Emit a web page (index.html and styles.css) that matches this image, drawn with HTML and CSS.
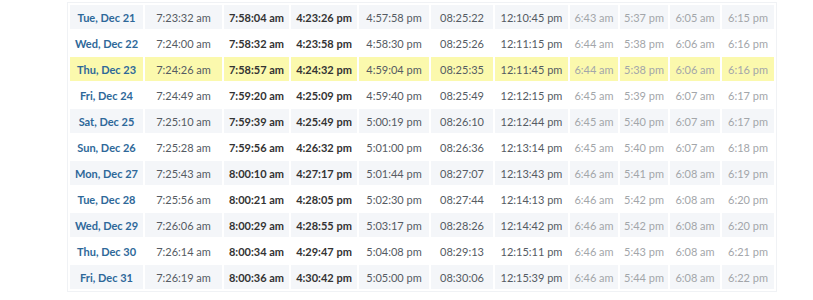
FILE: index.html
```html
<!DOCTYPE html>
<html>
<head>
<meta charset="utf-8">
<link rel="stylesheet" href="styles.css">
</head>
<body>
<div class="page">
<table class="sun">
<colgroup>
<col class="c1"><col class="c2"><col class="c3"><col class="c4"><col class="c5"><col class="c6"><col class="c7"><col class="c8"><col class="c9"><col class="c10"><col class="c11">
</colgroup>
<tbody>
<tr class="alt"><td class="day">Tue, Dec 21</td><td>7:23:32 am</td><td class="b">7:58:04 am</td><td class="b">4:23:26 pm</td><td>4:57:58 pm</td><td>08:25:22</td><td>12:10:45 pm</td><td class="l">6:43 am</td><td class="l">5:37 pm</td><td class="l">6:05 am</td><td class="l">6:15 pm</td></tr>
<tr><td class="day">Wed, Dec 22</td><td>7:24:00 am</td><td class="b">7:58:32 am</td><td class="b">4:23:58 pm</td><td>4:58:30 pm</td><td>08:25:26</td><td>12:11:15 pm</td><td class="l">6:44 am</td><td class="l">5:38 pm</td><td class="l">6:06 am</td><td class="l">6:16 pm</td></tr>
<tr class="today"><td class="day">Thu, Dec 23</td><td>7:24:26 am</td><td class="b">7:58:57 am</td><td class="b">4:24:32 pm</td><td>4:59:04 pm</td><td>08:25:35</td><td>12:11:45 pm</td><td class="l">6:44 am</td><td class="l">5:38 pm</td><td class="l">6:06 am</td><td class="l">6:16 pm</td></tr>
<tr><td class="day">Fri, Dec 24</td><td>7:24:49 am</td><td class="b">7:59:20 am</td><td class="b">4:25:09 pm</td><td>4:59:40 pm</td><td>08:25:49</td><td>12:12:15 pm</td><td class="l">6:45 am</td><td class="l">5:39 pm</td><td class="l">6:07 am</td><td class="l">6:17 pm</td></tr>
<tr class="alt"><td class="day">Sat, Dec 25</td><td>7:25:10 am</td><td class="b">7:59:39 am</td><td class="b">4:25:49 pm</td><td>5:00:19 pm</td><td>08:26:10</td><td>12:12:44 pm</td><td class="l">6:45 am</td><td class="l">5:40 pm</td><td class="l">6:07 am</td><td class="l">6:17 pm</td></tr>
<tr><td class="day">Sun, Dec 26</td><td>7:25:28 am</td><td class="b">7:59:56 am</td><td class="b">4:26:32 pm</td><td>5:01:00 pm</td><td>08:26:36</td><td>12:13:14 pm</td><td class="l">6:45 am</td><td class="l">5:40 pm</td><td class="l">6:07 am</td><td class="l">6:18 pm</td></tr>
<tr class="alt"><td class="day">Mon, Dec 27</td><td>7:25:43 am</td><td class="b">8:00:10 am</td><td class="b">4:27:17 pm</td><td>5:01:44 pm</td><td>08:27:07</td><td>12:13:43 pm</td><td class="l">6:46 am</td><td class="l">5:41 pm</td><td class="l">6:08 am</td><td class="l">6:19 pm</td></tr>
<tr><td class="day">Tue, Dec 28</td><td>7:25:56 am</td><td class="b">8:00:21 am</td><td class="b">4:28:05 pm</td><td>5:02:30 pm</td><td>08:27:44</td><td>12:14:13 pm</td><td class="l">6:46 am</td><td class="l">5:42 pm</td><td class="l">6:08 am</td><td class="l">6:20 pm</td></tr>
<tr class="alt"><td class="day">Wed, Dec 29</td><td>7:26:06 am</td><td class="b">8:00:29 am</td><td class="b">4:28:55 pm</td><td>5:03:17 pm</td><td>08:28:26</td><td>12:14:42 pm</td><td class="l">6:46 am</td><td class="l">5:42 pm</td><td class="l">6:08 am</td><td class="l">6:20 pm</td></tr>
<tr><td class="day">Thu, Dec 30</td><td>7:26:14 am</td><td class="b">8:00:34 am</td><td class="b">4:29:47 pm</td><td>5:04:08 pm</td><td>08:29:13</td><td>12:15:11 pm</td><td class="l">6:46 am</td><td class="l">5:43 pm</td><td class="l">6:08 am</td><td class="l">6:21 pm</td></tr>
<tr class="alt"><td class="day">Fri, Dec 31</td><td>7:26:19 am</td><td class="b">8:00:36 am</td><td class="b">4:30:42 pm</td><td>5:05:00 pm</td><td>08:30:06</td><td>12:15:39 pm</td><td class="l">6:46 am</td><td class="l">5:44 pm</td><td class="l">6:08 am</td><td class="l">6:22 pm</td></tr>
</tbody>
</table>
</div>
</body>
</html>
```
FILE: styles.css
```css
html, body {
  margin: 0;
  padding: 0;
  background: #ffffff;
}
.page {
  padding: 2px 0 0 67px;
}
.sun {
  border-collapse: separate;
  border-spacing: 2px;
  table-layout: fixed;
  width: 706px;
  border: 1px solid #f0f2f5;
  font-family: Lato, "Open Sans", sans-serif;
  font-size: 11px;
  color: #555b63;
}
.c1 { width: 73px; }
.c2 { width: 77px; }
.c3 { width: 65px; }
.c4 { width: 66px; }
.c5 { width: 70px; }
.c6 { width: 62px; }
.c7 { width: 73px; }
.c8 { width: 48px; }
.c9 { width: 48px; }
.c10 { width: 50px; }
.c11 { width: 52px; }
.sun td {
  height: 24px;
  padding: 0;
  text-align: center;
  white-space: nowrap;
}
.sun tr.alt td {
  background: #f4f6f9;
}
.sun tr.today td {
  background: #fbf9ad;
}
.sun td.day {
  color: #2e6899;
  font-weight: 700;
}
.sun td.b {
  color: #333;
  font-weight: 700;
}
.sun td.l {
  color: #a3a6aa;
}
```
